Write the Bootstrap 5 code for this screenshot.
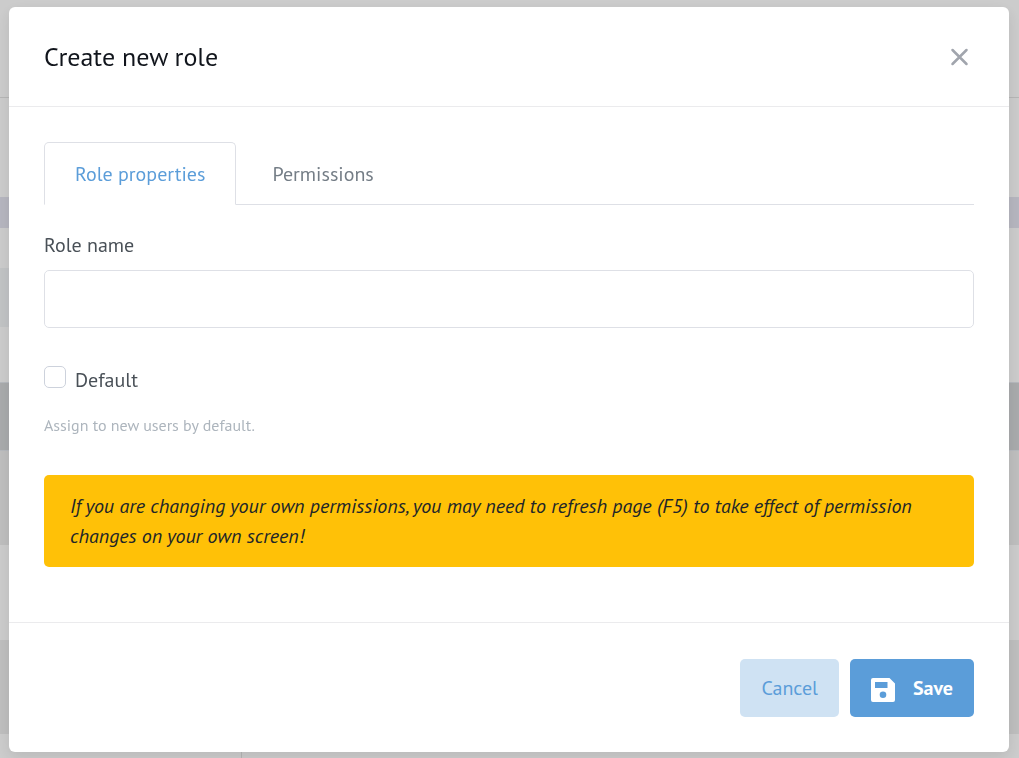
<!DOCTYPE html>
<html lang="en">
<head>
<meta charset="utf-8">
<meta name="viewport" content="width=device-width, initial-scale=1">
<title>Create new role</title>
<link href="https://cdn.jsdelivr.net/npm/bootstrap@5.3.0/dist/css/bootstrap.min.css" rel="stylesheet">
<style>
  body { font-family: "PT Sans", Lato, sans-serif; font-size: 20px; line-height: 30px; color: #495057; background: #fff; }
  .page-behind { min-height: 100vh; overflow: hidden; }
  .band-top { height: 98px; border-bottom: 1px solid #e4e4e4; }
  .band-tools { height: 99px; }
  .band-head { height: 31px; background: #e4e4f0; }
  .band-gap { height: 40px; }
  .band-side { height: 59px; width: 50%; background: #f3f5f7; }
  .band-space { height: 55px; }
  .band-dark { height: 69px; background: #d4d6d8; border: solid #e4e8ee; border-width: 1px 0; }
  .band-row { height: 94px; background: #efefef; }
  .band-plain { height: 95px; }
  .band-foot { flex-grow: 1; }
  .band-foot-side { width: 242px; border-right: 1px solid #e4e4e4; }
  .modal { background: rgba(0, 0, 0, .2); --bs-modal-width: none; }
  .modal-dialog { margin: 7px 10px 6px 9px; max-width: none; }
  .modal-content { border: 0; border-radius: 6px; box-shadow: 0 5px 15px rgba(0, 0, 0, .1); color: inherit; }
  .modal-header { padding: 0 35px; height: 100px; border-color: #ebebed; border-radius: 0; }
  .modal-title { font-size: 26px; font-weight: 400; color: #11151c; line-height: 36px; }
  .close-button { background: none; border: 0; padding: 0 5px; color: #a1a5ad; line-height: 0; }
  .modal-body { padding: 35px 35px 55px; }
  .nav-tabs { margin-bottom: 25px; --bs-nav-tabs-border-color: #dee0e6; --bs-nav-tabs-border-radius: 5px; --bs-nav-tabs-link-active-border-color: #dee0e6 #dee0e6 #fff; }
  .nav-tabs .nav-link { padding: 16px 30px 15px; color: #747d86; }
  .nav-tabs .nav-item + .nav-item { margin-left: 5px; }
  .nav-tabs .nav-link.active { color: #5b9dd9; }
  .role-label { margin-bottom: 10px; }
  .form-control { height: 58px; border: 1px solid #dee0e6; border-radius: 5px; font-size: 20px; }
  .default-row { margin-top: 38px; gap: 9px; line-height: 28px; }
  .form-check-input { width: 22px; height: 22px; border: 1px solid #cdd2dc; }
  .form-check-input[type=checkbox] { border-radius: 5px; }
  .hint-text { margin: 19px 0 38px; font-size: 16px; font-weight: 500; color: #adb5bd; line-height: 24px; }
  .alert { padding: 16px 26px; background: #ffc107; border: 0; border-radius: 5px; color: #212529; font-style: italic; }
  .modal-footer { padding: 36px 35px 35px; gap: 11px; border-color: #ebebed; }
  .modal-footer .btn { margin: 0; height: 58px; padding: 0 21px; border: 0; border-radius: 5px; font-size: 20px; }
  .btn-cancel, .btn-cancel:hover { background: #cfe2f3; color: #5b9dd9; }
  .btn-save, .btn-save:hover { background: #5b9dd9; color: #fff; font-weight: 700; }
  .save-icon { margin: 4px 18px 0 0; }
</style>
</head>
<body>
<div class="page-behind d-flex flex-column" aria-hidden="true">
  <div class="band-top"></div>
  <div class="band-tools"></div>
  <div class="band-head"></div>
  <div class="band-gap"></div>
  <div class="band-side"></div>
  <div class="band-space"></div>
  <div class="band-dark"></div>
  <div class="band-row"></div>
  <div class="band-plain"></div>
  <div class="band-row"></div>
  <div class="band-foot d-flex"><div class="band-foot-side"></div></div>
</div>

<div class="modal d-block" tabindex="-1" role="dialog" aria-modal="true" aria-labelledby="dialogTitle">
  <div class="modal-dialog">
    <form class="modal-content">
      <header class="modal-header">
        <h5 class="modal-title" id="dialogTitle">Create new role</h5>
        <button type="button" class="close-button" aria-label="Close">
          <svg width="19" height="19" viewBox="0 0 19 19" fill="none" stroke="currentColor" stroke-width="2.5" stroke-linecap="round"><path d="M2.500 3l14 14M16.500 3l-14 14"/></svg>
        </button>
      </header>
      <div class="modal-body">
        <ul class="nav nav-tabs">
          <li class="nav-item"><a class="nav-link active" href="#properties" aria-current="page">Role properties</a></li>
          <li class="nav-item"><a class="nav-link" href="#permissions">Permissions</a></li>
        </ul>
        <div id="properties">
          <label class="d-block role-label" for="roleName">Role name</label>
          <input type="text" class="form-control" id="roleName">
          <div class="default-row d-flex">
            <input class="form-check-input m-0" type="checkbox" id="isDefault" aria-describedby="defaultHint">
            <label for="isDefault">Default</label>
          </div>
          <div class="hint-text" id="defaultHint">Assign to new users by default.</div>
          <div class="alert mb-0" role="alert">If you are changing your own permissions, you may need to refresh page (F5) to take effect of permission changes on your own screen!</div>
        </div>
      </div>
      <footer class="modal-footer">
        <button type="button" class="btn btn-cancel">Cancel</button>
        <button type="submit" class="btn btn-save d-flex align-items-center">
          <svg class="save-icon" width="24" height="24" viewBox="0 0 24 24" fill="currentColor" fill-rule="evenodd"><path d="M2 0H18.500L24 5.500V22a2 2 0 0 1-2 2H2a2 2 0 0 1-2-2V2a2 2 0 0 1 2-2ZM4 4V10H16.500V4ZM12 13.500a3.300 3.300 0 1 0 0 6.600a3.300 3.300 0 1 0 0-6.600Z"/></svg>
          <span>Save</span>
        </button>
      </footer>
    </form>
  </div>
</div>
<script src="https://cdn.jsdelivr.net/npm/bootstrap@5.3.0/dist/js/bootstrap.bundle.min.js"></script>
</body>
</html>
